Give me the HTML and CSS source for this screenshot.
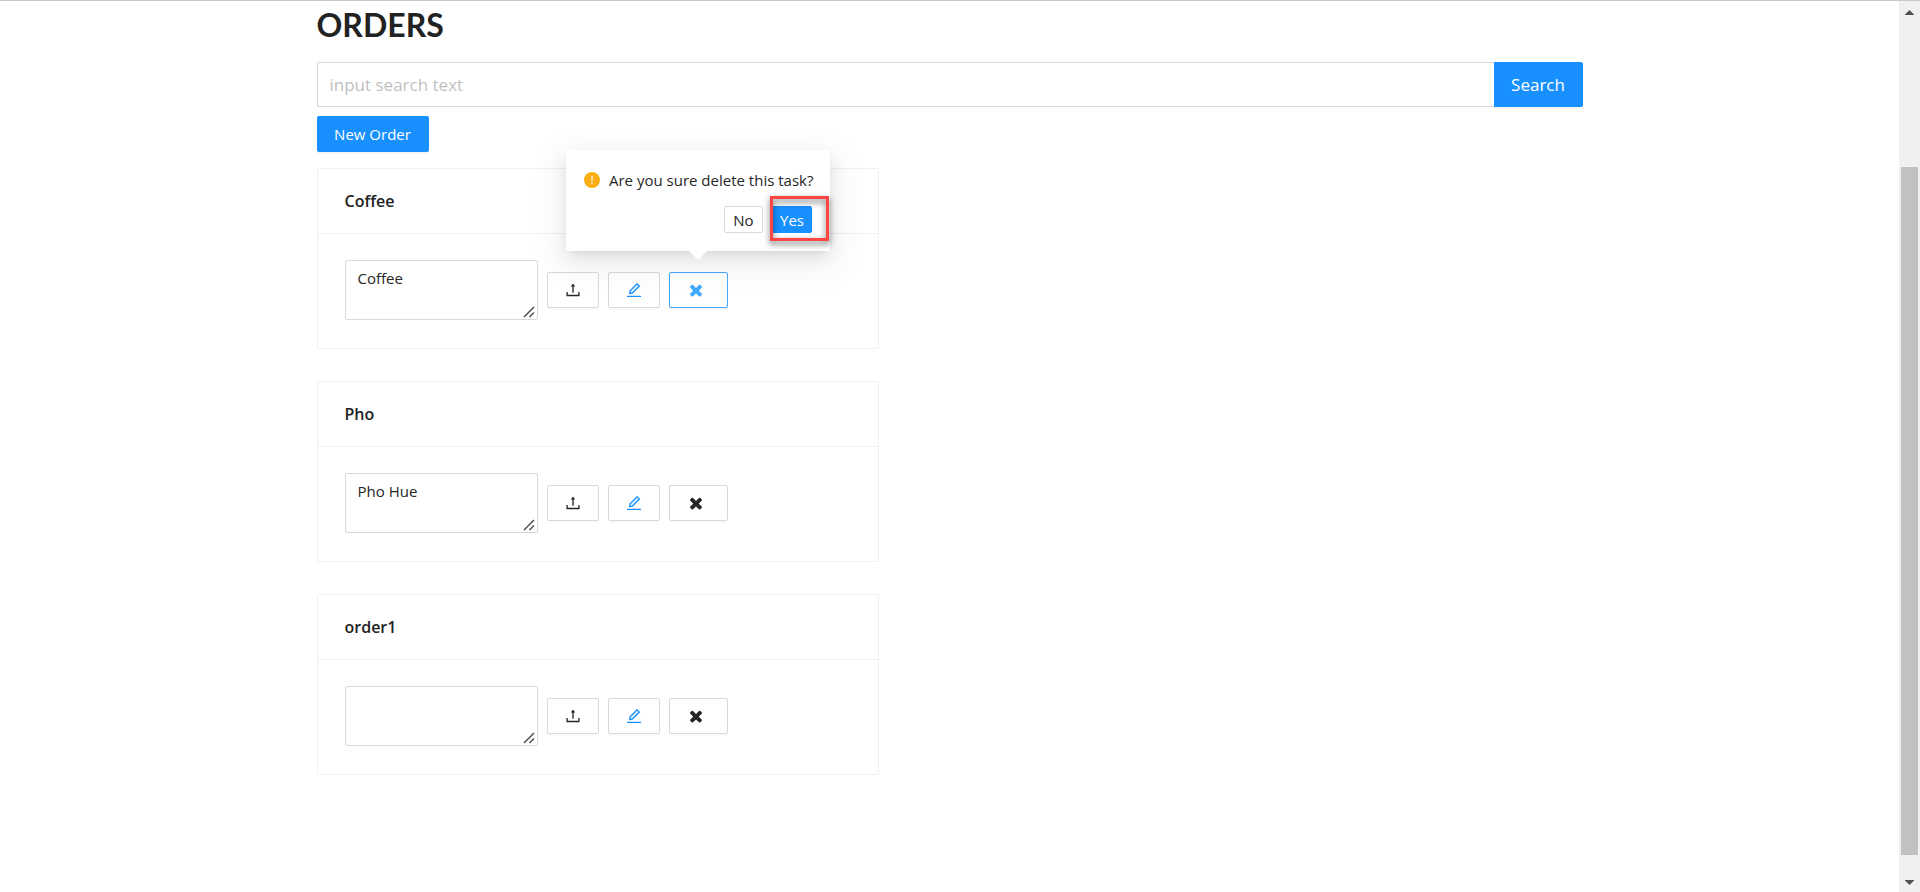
FILE: index.html
```html
<!DOCTYPE html>
<html lang="en">
<head>
<meta charset="utf-8">
<title>Orders</title>
<link rel="stylesheet" href="styles.css">
</head>
<body>
<svg class="sprite" aria-hidden="true">
  <symbol id="upload" viewBox="0 0 1024 1024"><path d="M400 317.7h73.9V656c0 4.4 3.6 8 8 8h60c4.4 0 8-3.6 8-8V317.7H624c6.7 0 10.4-7.7 6.3-12.9L518.3 163a8 8 0 00-12.6 0l-112 141.7c-4.1 5.3-.4 13 6.3 13zM878 626h-60c-4.4 0-8 3.6-8 8v154H214V634c0-4.4-3.6-8-8-8h-60c-4.4 0-8 3.6-8 8v198c0 17.7 14.3 32 32 32h684c17.7 0 32-14.3 32-32V634c0-4.4-3.6-8-8-8z"/></symbol>
  <symbol id="edit" viewBox="0 0 1024 1024"><path fill="#e6f7ff" d="M761.1 288.3L687.8 215 325.1 577.6l-15.6 89 88.9-15.7z"/><path fill="#1890ff" d="M880 836H144c-17.7 0-32 14.3-32 32v36c0 4.4 3.6 8 8 8h784c4.4 0 8-3.6 8-8v-36c0-17.7-14.3-32-32-32zm-622.3-84c2 0 4-.2 6-.5L431.9 722c2-.4 3.9-1.3 5.3-2.8l423.9-423.9a9.96 9.96 0 000-14.1L694.9 114.9c-1.9-1.9-4.4-2.9-7.1-2.9s-5.2 1-7.1 2.9L256.8 538.8c-1.5 1.5-2.4 3.3-2.8 5.3l-29.5 168.2a33.5 33.5 0 009.4 29.8c6.6 6.4 14.9 9.9 23.8 9.9zm67.4-174.4L687.8 215l73.3 73.3-362.7 362.6-88.9 15.7 15.6-89z"/></symbol>
  <symbol id="times" viewBox="0 0 1792 1792"><path d="M1490 1322q0 40-28 68l-136 136q-28 28-68 28t-68-28l-294-294-294 294q-28 28-68 28t-68-28l-136-136q-28-28-28-68t28-68l294-294-294-294q-28-28-28-68t28-68l136-136q28-28 68-28t68 28l294 294 294-294q28-28 68-28t68 28l136 136q28 28 28 68t-28 68l-294 294 294 294q28 28 28 68z"/></symbol>
</svg>
<div class="window">
  <main class="page">
    <div class="content">
    <h1 class="title">ORDERS</h1>
    <form class="search" role="search">
      <input class="search-input" type="text" placeholder="input search text" aria-label="Search orders">
      <button class="search-button" type="button">Search</button>
    </form>
    <button class="new-order" type="button">New Order</button>
    <div class="orders">
      <section class="card">
        <h2 class="card-title">Coffee</h2>
        <div class="card-body">
          <textarea class="note" aria-label="Coffee details">Coffee</textarea>
          <button class="action" type="button" aria-label="Upload"><svg class="icon"><use href="#upload"/></svg></button>
          <button class="action" type="button" aria-label="Edit"><svg class="icon"><use href="#edit"/></svg></button>
          <div class="delete-wrap">
            <button class="action action-delete action-active" type="button" aria-label="Delete"><svg class="icon"><use href="#times"/></svg></button>
            <div class="popover" role="dialog" aria-label="Confirm delete">
              <p class="popover-message">
                <svg class="warning" viewBox="0 0 16 16" aria-hidden="true"><circle cx="8" cy="8" r="8" fill="#faad14"/><path d="M7.4 4h1.2v5H7.4zM7.4 10.2h1.2v1.6H7.4z" fill="#fff"/></svg>
                <span>Are you sure delete this task?</span>
              </p>
              <div class="popover-buttons">
                <button class="small-button" type="button">No</button>
                <div class="marked"><button class="small-button small-primary" type="button">Yes</button></div>
              </div>
            </div>
          </div>
        </div>
      </section>
      <section class="card">
        <h2 class="card-title">Pho</h2>
        <div class="card-body">
          <textarea class="note" aria-label="Pho details">Pho Hue</textarea>
          <button class="action" type="button" aria-label="Upload"><svg class="icon"><use href="#upload"/></svg></button>
          <button class="action" type="button" aria-label="Edit"><svg class="icon"><use href="#edit"/></svg></button>
          <button class="action action-delete" type="button" aria-label="Delete"><svg class="icon"><use href="#times"/></svg></button>
        </div>
      </section>
      <section class="card">
        <h2 class="card-title">order1</h2>
        <div class="card-body">
          <textarea class="note" aria-label="order1 details"></textarea>
          <button class="action" type="button" aria-label="Upload"><svg class="icon"><use href="#upload"/></svg></button>
          <button class="action" type="button" aria-label="Edit"><svg class="icon"><use href="#edit"/></svg></button>
          <button class="action action-delete" type="button" aria-label="Delete"><svg class="icon"><use href="#times"/></svg></button>
        </div>
      </section>
    </div>
    </div>
  </main>
  <div class="scrollbar" aria-hidden="true">
    <svg class="arrow" viewBox="0 0 9 5"><path d="M4.5 0L9 4.5V5H0v-.5z" fill="#505050"/></svg>
    <div class="track"><div class="thumb"></div></div>
    <svg class="arrow" viewBox="0 0 9 5"><path d="M4.5 5L9 .5V0H0v.5z" fill="#505050"/></svg>
  </div>
</div>
</body>
</html>
```

FILE: styles.css
```css
* { box-sizing: border-box; }
body {
  margin: 0;
  background: #fff;
  color: #262626;
  font: 16px/24px "Open Sans", "Noto Sans", sans-serif;
}
button, input, textarea { font: inherit; color: inherit; margin: 0; }
h1, h2, p { margin: 0; }
.sprite { position: absolute; width: 0; height: 0; }
.window {
  display: flex;
  min-height: 100vh;
  border-top: 1px solid #c8c8c8;
}
.page { flex: 1; }
.content { width: 66.667%; margin: 0 auto; }
.title {
  padding: 4px 0 17px;
  font: 700 32px/40px Lato, sans-serif;
  color: #222;
}
.search { display: flex; height: 45px; }
.search-input {
  flex: 1;
  min-width: 0;
  padding: 0 12px;
  border: 1px solid #d9d9d9;
  border-right: 0;
  border-radius: 2px 0 0 2px;
  font-size: 17px;
}
.search-input::placeholder { color: #bfbfbf; opacity: 1; }
.search-button {
  width: 89px;
  padding: 0;
  border: 0;
  border-radius: 0 2px 2px 0;
  background: #1890ff;
  color: #fff;
  font-size: 17px;
  box-shadow: 0 2px 0 rgba(0, 0, 0, .04);
}
.new-order {
  display: block;
  width: 112px;
  height: 36px;
  margin: 9px 0 16px;
  padding: 0;
  border: 0;
  border-radius: 2px;
  background: #1890ff;
  color: #fff;
  font-size: 15px;
  box-shadow: 0 2px 0 rgba(0, 0, 0, .04);
}
.orders {
  display: flex;
  flex-direction: column;
  gap: 32px;
  max-width: 562px;
}
.card {
  border: 1px solid #f0f0f0;
  border-radius: 2px;
}
.card-title {
  padding: 20px 27px;
  border-bottom: 1px solid #f0f0f0;
  font-size: 16px;
  line-height: 24px;
  font-weight: 600;
  color: #222;
}
.card-body {
  display: flex;
  align-items: center;
  gap: 9px;
  padding: 26px 27px 28px;
}
.note {
  width: 193px;
  height: 60px;
  padding: 5px 12px;
  border: 1px solid #d9d9d9;
  border-radius: 2px;
  font-size: 15px;
  line-height: 25px;
  background: #fff;
  resize: both;
}
.note::-webkit-resizer {
  background: url("data:image/svg+xml,%3Csvg xmlns='http://www.w3.org/2000/svg' width='15' height='15'%3E%3Cpath d='M2 13L12 3M7.5 13L12 8.5' stroke='%23505050' stroke-width='1.5'/%3E%3C/svg%3E") no-repeat;
}
.action {
  display: grid;
  place-items: center;
  width: 52px;
  height: 36px;
  padding: 0;
  border: 1px solid #d9d9d9;
  border-radius: 2px;
  background: #fff;
  box-shadow: 0 2px 0 rgba(0, 0, 0, .02);
}
.action-delete { width: 59px; padding-right: 5px; }
.action-active { border-color: #40a9ff; color: #40a9ff; }
.icon { width: 18px; height: 18px; fill: currentColor; }
.delete-wrap { position: relative; }
.popover {
  position: absolute;
  left: 50%;
  bottom: calc(100% + 21px);
  width: 264px;
  margin-left: -132px;
  padding: 18px;
  border-radius: 2px;
  background: #fff;
  box-shadow: 0 3px 7px -4px rgba(0, 0, 0, .12), 0 7px 18px rgba(0, 0, 0, .08), 0 10px 32px 9px rgba(0, 0, 0, .05);
}
.popover::after {
  content: "";
  position: absolute;
  left: 50%;
  top: 100%;
  margin-left: -9px;
  border: 9px solid transparent;
  border-top-color: #fff;
  border-bottom: 0;
}
.popover-message {
  display: flex;
  align-items: center;
  gap: 9px;
  margin-bottom: 14px;
  font-size: 15px;
  white-space: nowrap;
}
.warning { width: 16px; height: 16px; flex: none; }
.popover-buttons { display: flex; justify-content: flex-end; gap: 9px; }
.small-button {
  display: block;
  width: 39px;
  height: 27px;
  padding: 0;
  border: 1px solid #d9d9d9;
  border-radius: 2px;
  background: #fff;
  font-size: 15px;
  line-height: 24px;
}
.small-primary { width: 40px; border-color: #1890ff; background: #1890ff; color: #fff; }
.marked { position: relative; }
.marked::after {
  content: "";
  position: absolute;
  inset: -10px -17px -8px -2px;
  border: 3px solid #f44;
  filter: drop-shadow(0 3px 3px rgba(0, 0, 0, .6));
}
.scrollbar {
  display: flex;
  flex-direction: column;
  align-items: center;
  width: 21px;
  padding: 9px 2px 7px;
  background: #f0f0f0;
}
.arrow { width: 9px; height: 5px; }
.track { flex: 1; align-self: stretch; padding-top: 152px; padding-bottom: 25px; }
.thumb { width: 17px; height: 100%; background: #c1c1c1; }
```
